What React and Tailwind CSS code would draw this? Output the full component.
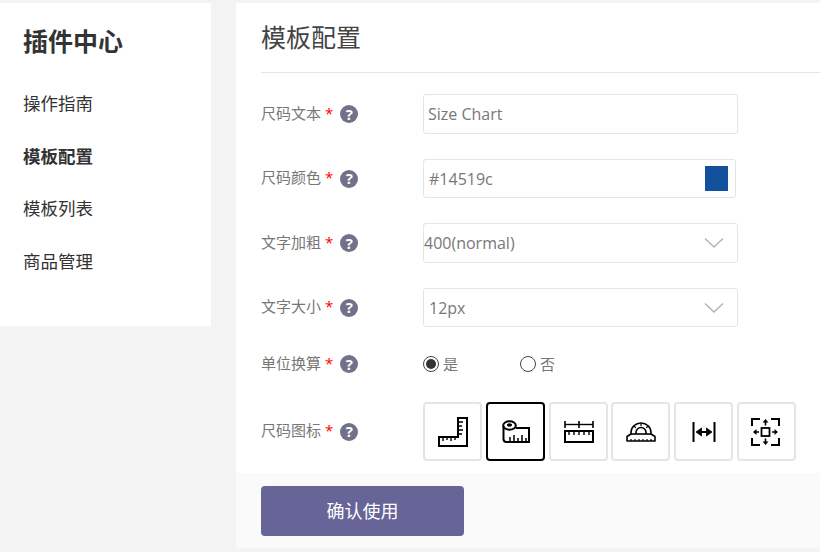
const font = { fontFamily: '"Open Sans", "Noto Sans CJK SC", sans-serif' };

function Help() {
  return (
    <span className="flex h-[18px] w-[18px] shrink-0 items-center justify-center rounded-full bg-[#72718a] text-[15px] leading-none font-bold text-white">?</span>
  );
}

function Label({ children }) {
  return (
    <div className="flex w-[162px] shrink-0 items-center text-[15px] text-[#777]">
      <span className="-mt-[2px]">{children}</span>
      <span className="-mt-[2px] ml-[4px] mr-[7px] text-[#f00]">*</span>
      <Help />
    </div>
  );
}

function Chevron() {
  return (
    <svg width="20" height="12" viewBox="0 0 20 12" fill="none" stroke="#b4b4b4" strokeWidth="1.6">
      <path d="M1 1.5 L10 10 L19 1.5" />
    </svg>
  );
}

const S = { fill: "none", stroke: "#000", strokeWidth: 2 };

function IconSquare() {
  return (
    <svg width="30" height="30" viewBox="0 0 30 30" {...S}>
      <path d="M20 1H29V29H1V20H20Z" />
      <path strokeWidth="1.4" d="M5 20v4M9 20v3M13 20v4M17 20v3M20 5h5M20 9h4M20 13h5M20 17h4" />
    </svg>
  );
}
function IconTape() {
  return (
    <svg width="28" height="23" viewBox="0 0 28 23" {...S}>
      <path d="M1.5 6v13a3 3 0 0 0 3 3H27V8H14" />
      <ellipse cx="7.5" cy="5.5" rx="6.3" ry="4.3" />
      <ellipse cx="7.5" cy="5" rx="2.2" ry="1.2" fill="#000" strokeWidth="1" />
      <path strokeWidth="1.5" d="M8 22v-5M12 22v-7M16 22v-4M20 22v-7M24 22v-4" />
    </svg>
  );
}
function IconRuler() {
  return (
    <svg width="30" height="22" viewBox="0 0 30 22" {...S}>
      <path d="M1 0v7M29 0v7M15 0v7" strokeWidth="1.6" />
      <path d="M1 3.5H29" strokeWidth="1.4" />
      <path d="M1 10H29V21H1Z" />
      <path strokeWidth="1.4" d="M5 10v4M10 10v4M15 10v4M20 10v4M25 10v4" />
    </svg>
  );
}
function IconProtractor() {
  return (
    <svg width="30" height="20" viewBox="0 0 30 20" {...S} strokeWidth="1.6">
      <path d="M1 19V14.5L5 12V10.5A10 9.5 0 0 1 25 10.500V12L29 14.500V19Z" strokeLinejoin="round" />
      <path d="M5 12H25" />
      <path d="M10 12V10.500A5 5 0 0 1 20 10.500V12" />
      <path strokeWidth="1.2" d="M5 19v-2M9 19v-2M13 19v-2M17 19v-2M21 19v-2M25 19v-2M15 1.500v2.500M8 4l1.800 1.800M22 4l-1.800 1.800" />
    </svg>
  );
}
function IconWidth() {
  return (
    <svg width="24" height="20" viewBox="0 0 24 20" {...S}>
      <path d="M1.500 0v20M22.500 0v20M6 10h12" />
      <path d="M4 10l5.500-4v8ZM20 10l-5.500-4v8Z" fill="#000" strokeWidth="0.8" />
    </svg>
  );
}
function IconFit() {
  return (
    <svg width="29" height="28" viewBox="0 0 29 28" className="-ml-[3px]" {...S}>
      <path d="M1 8V1H9M20 1H28V8M28 20V27H20M9 27H1V20" />
      <rect x="10.500" y="10" width="8" height="8" strokeWidth="1.800" />
      <path strokeWidth="1.600" d="M14.500 3v4.500M14.500 20.500v4.500M3 14h5M21 14h5" />
      <path fill="#000" stroke="none" d="M14.500 1l3 3.500h-6ZM14.500 27l3-3.500h-6ZM2 14l3.500-3v6ZM27 14l-3.500-3v6Z" />
    </svg>
  );
}

const icons = [IconSquare, IconTape, IconRuler, IconProtractor, IconWidth, IconFit];
const nav = ["操作指南", "模板配置", "模板列表", "商品管理"];

export default function App() {
  return (
    <div className="flex h-[552px] w-[820px] items-start overflow-hidden bg-[#f3f3f3] pt-[3px]" style={font}>
      <aside className="h-[323px] w-[211px] shrink-0 bg-white pl-[23px] pt-[22px]">
        <h1 className="mb-[20px] text-[25px] leading-[32px] font-bold text-[#333]">插件中心</h1>
        <ul className="flex flex-col text-[17.5px] text-[#333]">
          {nav.map((n, i) => (
            <li key={n} className={`h-[52.5px] leading-[52.5px] ${i === 1 ? "font-bold" : ""}`}>{n}</li>
          ))}
        </ul>
      </aside>

      <main className="ml-[25px] flex h-[545px] w-[584px] shrink-0 flex-col bg-white">
        <div className="ml-[25px] flex h-[70px] items-center border-b border-[#e5e5e5] text-[25px] text-[#444]">模板配置</div>

        <div className="flex flex-1 flex-col pl-[25px]">
          <div className="mt-[21px] flex h-[40px] items-center">
            <Label>尺码文本</Label>
            <div className="flex h-full w-[315px] items-center rounded-[3px] border border-[#e5e5e5] pl-[4px] text-[16px] text-[#777]">Size Chart</div>
          </div>
          <div className="mt-[25px] flex h-[39px] items-center">
            <Label>尺码颜色</Label>
            <div className="flex h-full w-[313px] items-center justify-between rounded-[3px] border border-[#e5e5e5] pl-[5px] pr-[7px] text-[16px] text-[#777]">
              <span>#14519c</span>
              <span className="h-[25px] w-[23px] bg-[#14519c]" />
            </div>
          </div>
          <div className="mt-[25px] flex h-[40px] items-center">
            <Label>文字加粗</Label>
            <div className="flex h-full w-[315px] items-center justify-between rounded-[3px] border border-[#e5e5e5] pr-[13px] text-[16px] text-[#777]">
              <span>400(normal)</span>
              <Chevron />
            </div>
          </div>
          <div className="mt-[25px] flex h-[39px] items-center">
            <Label>文字大小</Label>
            <div className="flex h-full w-[315px] items-center justify-between rounded-[3px] border border-[#e5e5e5] pl-[5px] pr-[13px] text-[16px] text-[#777]">
              <span>12px</span>
              <Chevron />
            </div>
          </div>
          <div className="mt-[24px] flex h-[26px] items-center">
            <Label>单位换算</Label>
            <div className="flex items-center text-[15px] text-[#777]">
              <span className="flex h-[16px] w-[16px] items-center justify-center rounded-full border border-[#444]">
                <span className="h-[10px] w-[10px] rounded-full bg-[#333]" />
              </span>
              <span className="ml-[4px] w-[77px]">是</span>
              <span className="h-[16px] w-[16px] rounded-full border border-[#444]" />
              <span className="ml-[4px]">否</span>
            </div>
          </div>
          <div className="mt-[25px] flex h-[59px] items-center">
            <Label>尺码图标</Label>
            <div className="flex gap-[4px]">
              {icons.map((Icon, i) => (
                <div key={i} className={`flex h-[59px] w-[59px] items-center justify-center rounded-[4px] border-2 ${i === 1 ? "border-black" : "border-[#e5e5e5]"} ${i === 3 ? "-ml-[1px]" : ""}`}>
                  <Icon />
                </div>
              ))}
            </div>
          </div>
        </div>

        <div className="flex h-[75px] items-start bg-[#fafafa] pl-[25px] pt-[13px]">
          <button className="h-[50px] w-[203px] rounded-[4px] bg-[#676498] text-[18px] text-white">确认使用</button>
        </div>
      </main>
    </div>
  );
}
